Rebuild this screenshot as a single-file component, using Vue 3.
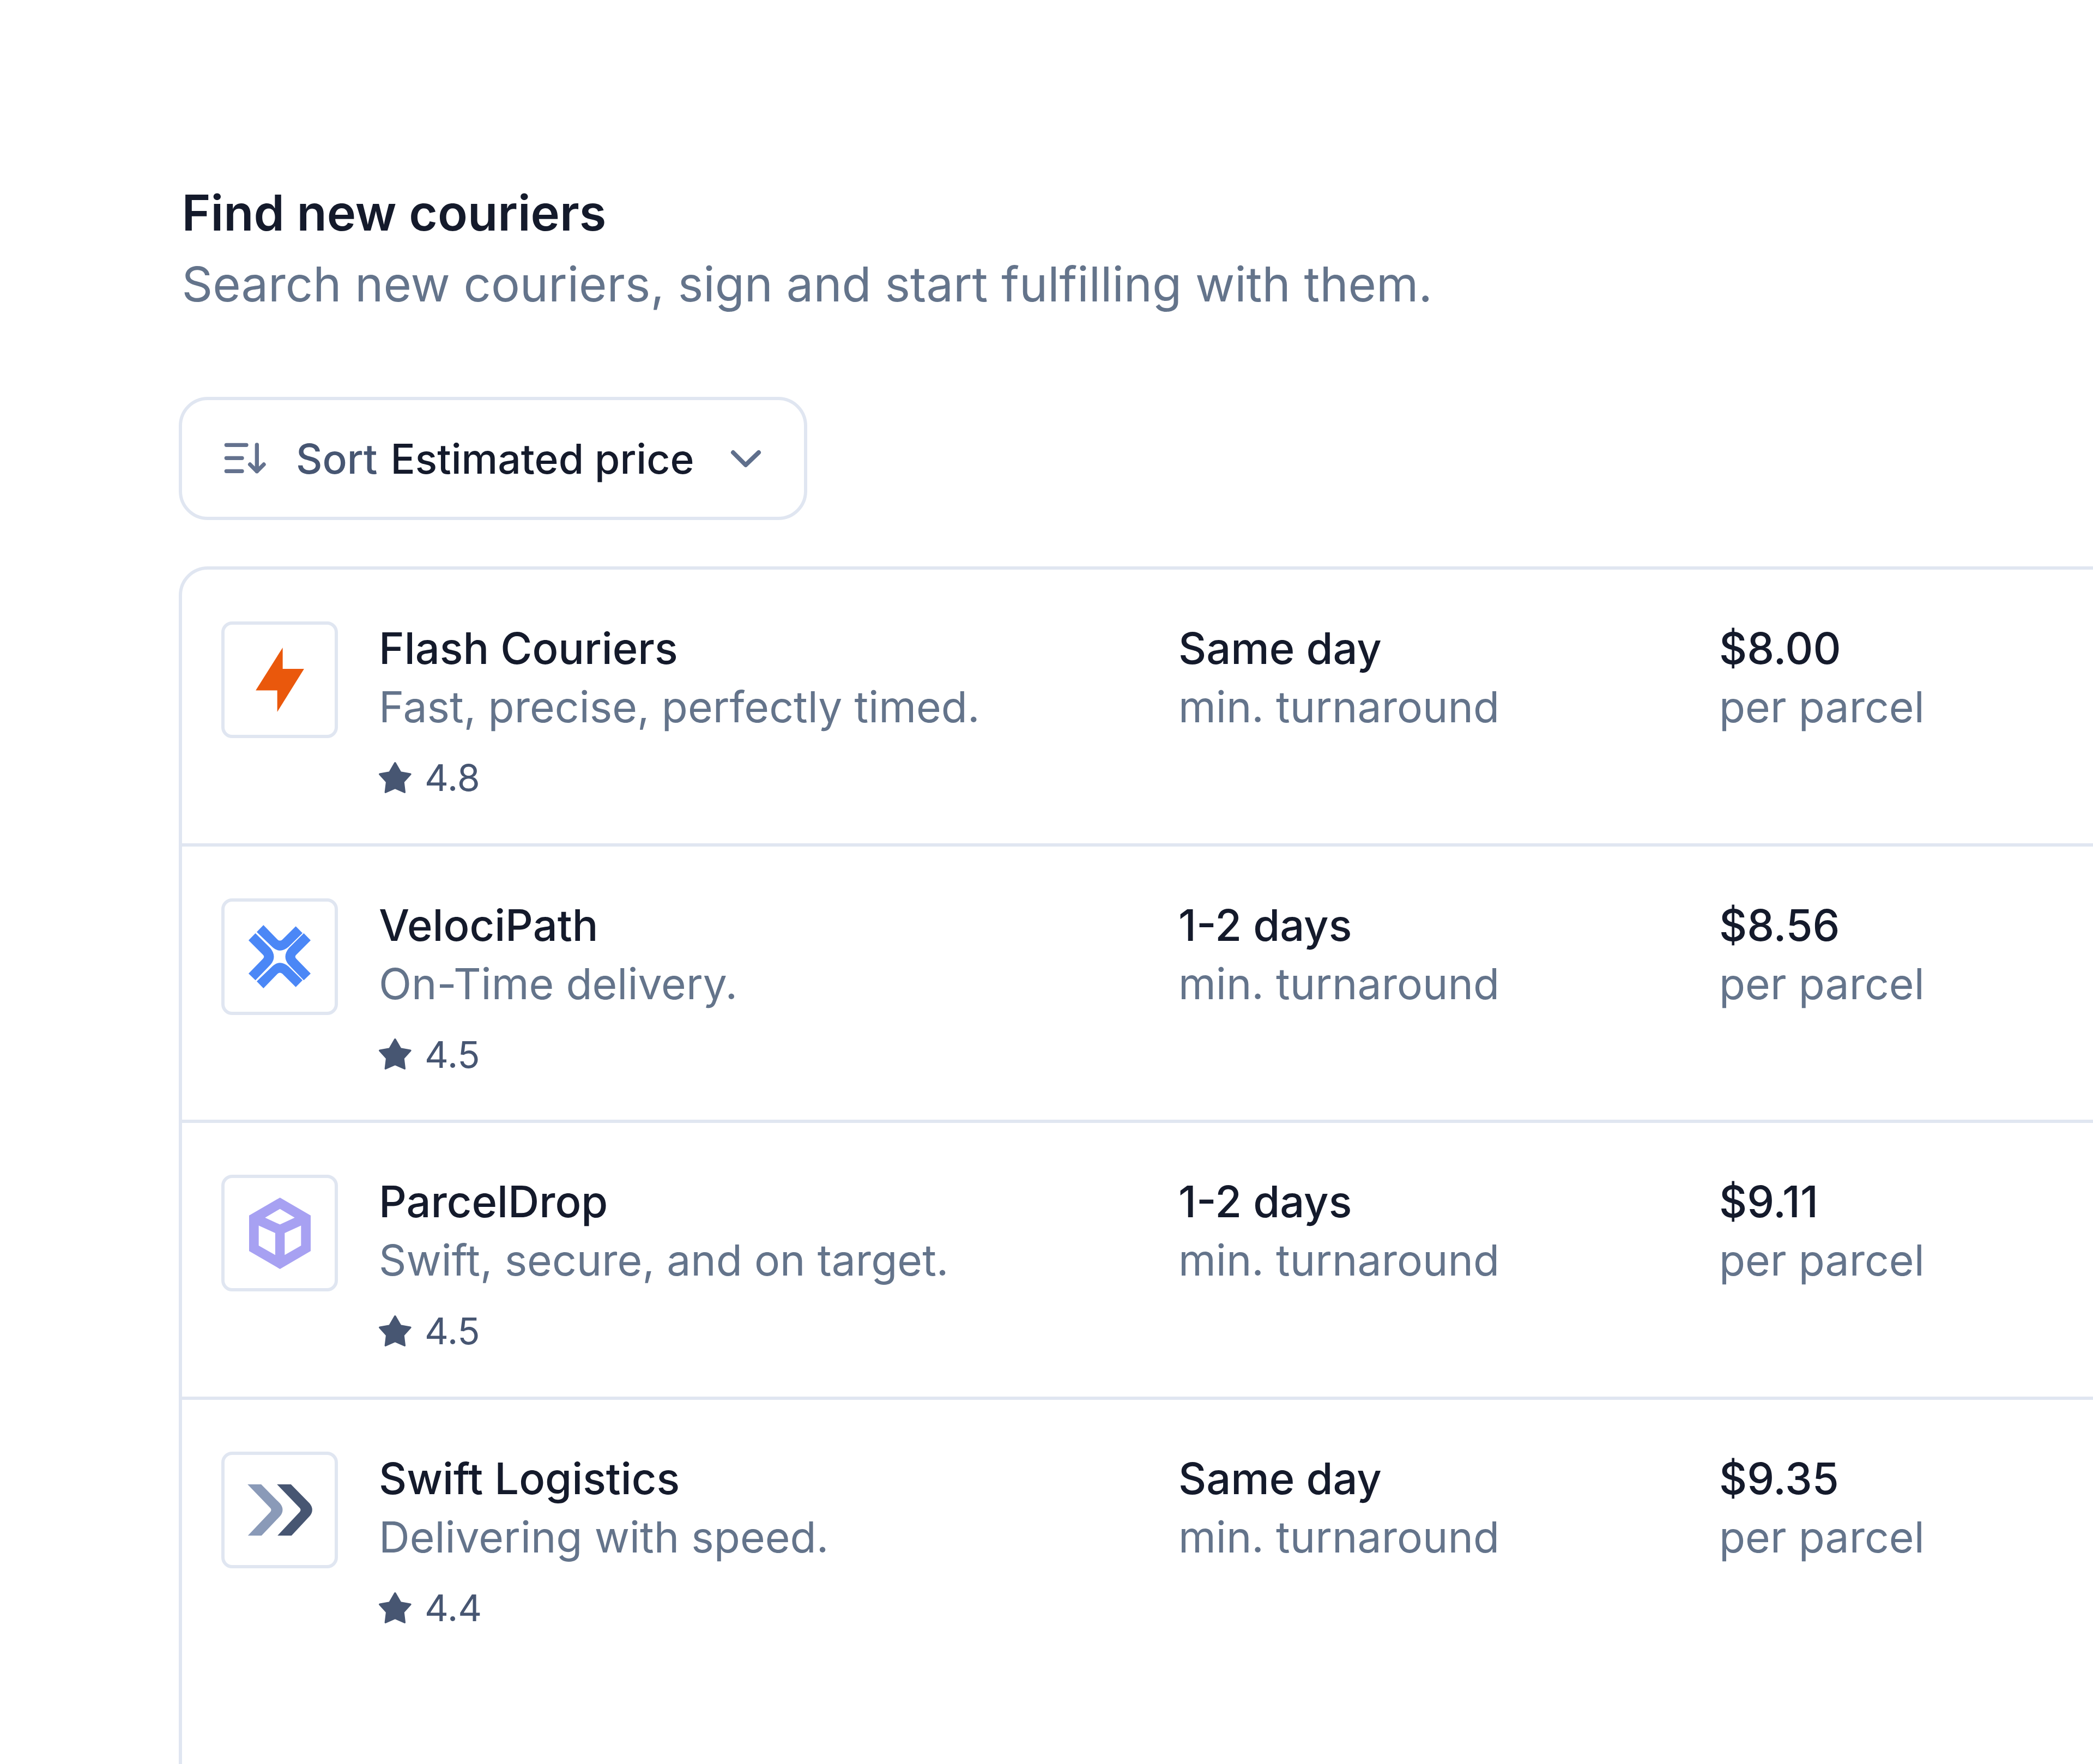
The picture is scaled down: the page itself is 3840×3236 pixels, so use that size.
<template>
  <main class="page">
    <header class="intro">
      <h2>Find new couriers</h2>
      <p>Search new couriers, sign and start fulfilling with them.</p>
    </header>

    <button class="sort" type="button">
      <svg class="sort-icon" viewBox="270 305 240 180" fill="none" stroke="#64728e" stroke-width="22" stroke-linecap="round" stroke-linejoin="round">
        <path d="M286 321H396M286 393H372M286 465H372M454 320V466M416 428L454 466L492 428" />
      </svg>
      <span class="sort-label">Sort</span>
      <span class="sort-value">Estimated price</span>
      <svg class="chevron" viewBox="0 0 57 33" fill="none" stroke="#5f6f8c" stroke-width="8" stroke-linecap="round" stroke-linejoin="round">
        <path d="M5 5L28 28L52 5" />
      </svg>
    </button>

    <section class="list">
      <article v-for="courier in couriers" :key="courier.name" class="row">
        <div class="main">
          <div class="logo">
            <svg v-if="courier.logo === 'bolt'" class="bolt" viewBox="236 205 267 355">
              <path d="M385 205V322H503L355 560V441H236Z" fill="#ea580c" />
            </svg>
            <svg v-else-if="courier.logo === 'cross'" class="cross" viewBox="200 198 342 348" fill="#4b87f6">
              <path d="M282 198L360 278Q372 289 386 278L460 205L497 242L420 318Q372 358 330 318L245 236Z" />
              <path d="M282 546L360 466Q372 455 386 466L460 539L497 502L420 426Q372 386 330 426L245 508Z" />
              <path d="M238 243L320 325Q358 372 322 415L238 502L200 465L278 385Q292 372 278 360L200 282Z" />
              <path d="M504 243L422 325Q384 372 420 415L504 502L542 465L464 385Q450 372 464 360L542 282Z" />
            </svg>
            <svg v-else-if="courier.logo === 'cube'" class="cube" viewBox="200 172 339 393">
              <path fill-rule="evenodd" fill="#a7a1f2" d="M370 172L539 270V466L370 565L200 466V270ZM370 234L288 282L370 320L451 282ZM253 326V436L344 488V367ZM486 326L396 367V488L486 436Z" />
            </svg>
            <svg v-else class="arrows" viewBox="193 220 356 282">
              <path fill="#8a9ab8" d="M193 220H268L372 325Q400 360 372 395L270 502H195L318 372Q328 361 318 350Z" />
              <path fill="#475672" d="M355 220H432L535 325Q563 360 535 395L435 502H358L480 372Q490 361 480 350Z" />
            </svg>
          </div>

          <div class="info">
            <h3>{{ courier.name }}</h3>
            <p class="muted">{{ courier.tagline }}</p>
            <div class="rating">
              <svg class="star" viewBox="40 43 191 184">
                <path d="M135 54L165 106L220 116L181 159L188 216L135 192L82 216L89 159L50 116L105 106Z" fill="#475672" stroke="#475672" stroke-width="10" stroke-linejoin="round" />
              </svg>
              <span>{{ courier.rating }}</span>
            </div>
          </div>
        </div>

        <div class="cell">
          <h3>{{ courier.speed }}</h3>
          <p class="muted">min. turnaround</p>
        </div>

        <div class="cell">
          <h3>{{ courier.price }}</h3>
          <p class="muted">per parcel</p>
        </div>
      </article>
    </section>
  </main>
</template>

<script setup>
const couriers = [
  { name: "Flash Couriers", tagline: "Fast, precise, perfectly timed.", rating: "4.8", speed: "Same day", price: "$8.00", logo: "bolt" },
  { name: "VelociPath", tagline: "On-Time delivery.", rating: "4.5", speed: "1-2 days", price: "$8.56", logo: "cross" },
  { name: "ParcelDrop", tagline: "Swift, secure, and on target.", rating: "4.5", speed: "1-2 days", price: "$9.11", logo: "cube" },
  { name: "Swift Logistics", tagline: "Delivering with speed.", rating: "4.4", speed: "Same day", price: "$9.35", logo: "arrows" },
];
</script>

<style>
html,
body {
  margin: 0;
  background: #fff;
  overflow: hidden;
}
</style>

<style scoped>
.page {
  height: 3236px;
  overflow: hidden;
  padding: 331px 0 0 328px;
  box-sizing: border-box;
  font-family: Inter, "Liberation Sans", sans-serif;
  background: #fff;
}

.intro {
  padding-left: 5.5px;
}

.intro h2 {
  margin: 0;
  font-size: 90.3px;
  line-height: 120px;
  font-weight: 600;
  color: #141a2b;
}

.intro p {
  margin: 10px 0 0;
  font-size: 88.3px;
  line-height: 120px;
  font-weight: 400;
  color: #64748b;
}

.sort {
  display: flex;
  align-items: center;
  width: 1153px;
  height: 226px;
  margin-top: 147px;
  padding: 0 0 0 76px;
  box-sizing: border-box;
  background: #fff;
  border: 6px solid #e0e6f1;
  border-radius: 53px;
  font: inherit;
  font-size: 75px;
  font-weight: 500;
}

.sort-icon {
  width: 80px;
  height: 60px;
  margin-right: 53px;
}

.sort-label {
  color: #475672;
  margin-right: 24px;
}

.sort-value {
  color: #141a2b;
}

.chevron {
  width: 57px;
  height: 33px;
  margin-left: 66px;
}

.list {
  width: 3800px;
  height: 2400px;
  margin-top: 85px;
  box-sizing: border-box;
  border: 6px solid #e0e6f1;
  border-radius: 53px 0 0 0;
}

.row {
  display: grid;
  grid-template-columns: 1756px 992px 1fr;
  align-content: start;
  height: 507.7px;
  padding: 90px 0 0 72px;
  box-sizing: border-box;
  border-bottom: 6px solid #e0e6f1;
}

.row:last-child {
  border-bottom: 0;
}

.main {
  display: flex;
  align-items: flex-start;
  gap: 75px;
}

.logo {
  display: flex;
  align-items: center;
  justify-content: center;
  flex: none;
  width: 214px;
  height: 214px;
  margin-top: 5px;
  box-sizing: border-box;
  border: 6px solid #e0e6f1;
  border-radius: 20px;
}

.bolt {
  width: 89px;
  height: 118px;
}

.cross {
  width: 114px;
  height: 116px;
}

.cube {
  width: 113px;
  height: 131px;
}

.arrows {
  width: 119px;
  height: 94px;
}

.row h3 {
  margin: 0;
  font-size: 79.3px;
  line-height: 108px;
  font-weight: 500;
  color: #141a2b;
}

.muted {
  margin: 0;
  font-size: 78.6px;
  line-height: 108px;
  color: #64748b;
}

.rating {
  display: flex;
  align-items: center;
  gap: 22px;
  margin: 27px 0 0 -2px;
  font-size: 68px;
  line-height: 96px;
  color: #475672;
}

.star {
  width: 64px;
  height: 61px;
}
</style>
